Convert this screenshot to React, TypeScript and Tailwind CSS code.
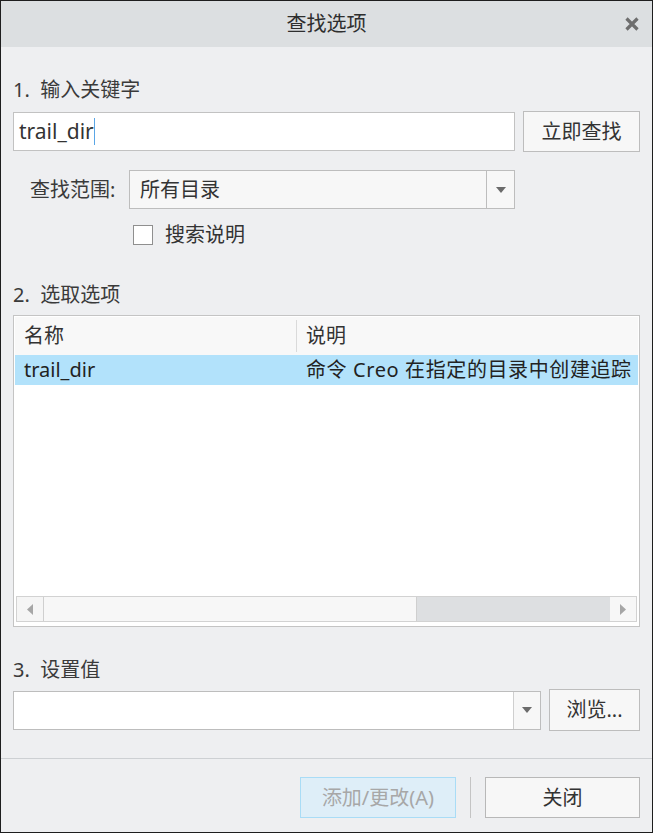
const FONT = "font-['Noto_Sans','Noto_Sans_CJK_SC',sans-serif]";

function Caret() {
  return (
    <svg width="10" height="6" viewBox="0 0 10 6" className="block">
      <path d="M0 0h10L5 6z" fill="#6b6b6b" />
    </svg>
  );
}

function Section({ children }: { children: React.ReactNode }) {
  return <div className="h-[24px] leading-[24px] text-[20px] text-[#3a3a3a]">{children}</div>;
}

export default function App() {
  return (
    <div
      className={`w-[653px] h-[833px] border border-[#1e1e1e] bg-[#eeeff1] flex flex-col text-[#333] ${FONT}`}
    >
      {/* Title bar */}
      <div className="relative h-[46px] bg-[#dcdfe1] flex items-center justify-center shrink-0">
        <span className="text-[20px] leading-[24px] text-[#2e2e2e]">查找选项</span>
        <svg
          width="14"
          height="14"
          viewBox="0 0 14 14"
          className="absolute right-[13px] top-[16px]"
        >
          <path d="M1.5 1.5l11 11M12.5 1.5l-11 11" stroke="#6e6e6e" strokeWidth="3.2" />
        </svg>
      </div>

      <div className="flex-1 px-[12px] flex flex-col">
        {/* 1 */}
        <div className="mt-[31px]">
          <Section>1.&nbsp; 输入关键字</Section>
        </div>
        <div className="mt-[9px] flex items-center gap-[8px] h-[41px]">
          <div className="flex-1 h-[39px] bg-white border border-[#c2c2c2] flex items-center px-[5px] text-[21px] text-[#333]">
            <span>trail_dir</span>
            <span className="w-px h-[27px] bg-[#5aa6e6]" />
          </div>
          <button className="w-[117px] h-[41px] bg-[#f7f7f7] border border-[#bdbdbd] text-[20px] text-[#333]">
            立即查找
          </button>
        </div>

        <div className="mt-[18px] flex items-center h-[39px] pl-[17px]">
          <span className="text-[20px] text-[#3a3a3a] w-[99px]">查找范围:</span>
          <div className="w-[386px] h-[39px] bg-[#f7f7f7] border border-[#bdbdbd] flex">
            <div className="flex-1 flex items-center px-[10px] text-[20px] text-[#333]">所有目录</div>
            <div className="w-[28px] border-l border-[#bdbdbd] flex items-center justify-center">
              <Caret />
            </div>
          </div>
        </div>

        <div className="mt-[15px] flex items-center h-[21px] pl-[120px]">
          <div className="w-[20px] h-[20px] bg-white border border-[#8f8f8f]" />
          <span className="ml-[12px] text-[20px] text-[#333]">搜索说明</span>
        </div>

        {/* 2 */}
        <div className="mt-[38px]">
          <Section>2.&nbsp; 选取选项</Section>
        </div>
        <div className="mt-[8px] h-[312px] border border-[#c4c4c4] bg-white p-px flex flex-col">
          <div className="h-[38px] bg-[#f8f8f8] flex items-center text-[20px] text-[#333] shrink-0">
            <div className="w-[281px] pl-[9px]">名称</div>
            <div className="w-px h-[32px] bg-[#dadada]" />
            <div className="pl-[9px]">说明</div>
          </div>
          <div className="h-[30px] bg-[#b2e2fb] flex items-center text-[20px] text-[#222] whitespace-nowrap overflow-hidden shrink-0">
            <div className="w-[282px] pl-[9px] shrink-0">trail_dir</div>
            <div className="pl-[9px] tracking-[0.6px]">命令 Creo 在指定的目录中创建追踪</div>
          </div>
          <div className="flex-1" />
          {/* horizontal scrollbar */}
          <div className="h-[26px] flex bg-[#dddfe1] border border-[#d2d2d2] mx-px mb-[3px]">
            <div className="w-[27px] bg-[#f5f5f5] border-r border-[#cfcfcf] flex items-center justify-center">
              <svg width="6" height="11" viewBox="0 0 6 11">
                <path d="M6 0v11L0 5.5z" fill="#a6a6a6" />
              </svg>
            </div>
            <div className="w-[373px] bg-[#f7f7f7] border-r border-[#cfcfcf]" />
            <div className="flex-1" />
            <div className="w-[26px] bg-[#f7f7f7] flex items-center justify-center">
              <svg width="6" height="11" viewBox="0 0 6 11">
                <path d="M0 0v11l6-5.5z" fill="#a6a6a6" />
              </svg>
            </div>
          </div>
        </div>

        {/* 3 */}
        <div className="mt-[31px]">
          <Section>3.&nbsp; 设置值</Section>
        </div>
        <div className="mt-[7px] flex items-center gap-[8px] h-[42px]">
          <div className="w-[528px] h-[39px] bg-white border border-[#bdbdbd] flex">
            <div className="flex-1" />
            <div className="w-[27px] bg-[#f7f7f7] border-l border-[#cfcfcf] flex items-center justify-center">
              <Caret />
            </div>
          </div>
          <button className="flex-1 h-[42px] bg-[#f7f7f7] border border-[#bdbdbd] text-[20px] text-[#333]">
            浏览...
          </button>
        </div>
      </div>

      {/* Footer */}
      <div className="h-[74px] border-t border-[#cdd0d3] flex items-start justify-end pt-[18px] pr-[12px] shrink-0">
        <button className="w-[156px] h-[41px] bg-[#deeef8] border border-[#a9dcf6] text-[20px] text-[#a7a7a7]">
          添加/更改(A)
        </button>
        <div className="w-px h-[41px] bg-[#c4c4c4] mx-[14px]" />
        <button className="w-[155px] h-[41px] bg-[#f7f7f7] border border-[#b8b8b8] text-[20px] text-[#333]">
          关闭
        </button>
      </div>
    </div>
  );
}
